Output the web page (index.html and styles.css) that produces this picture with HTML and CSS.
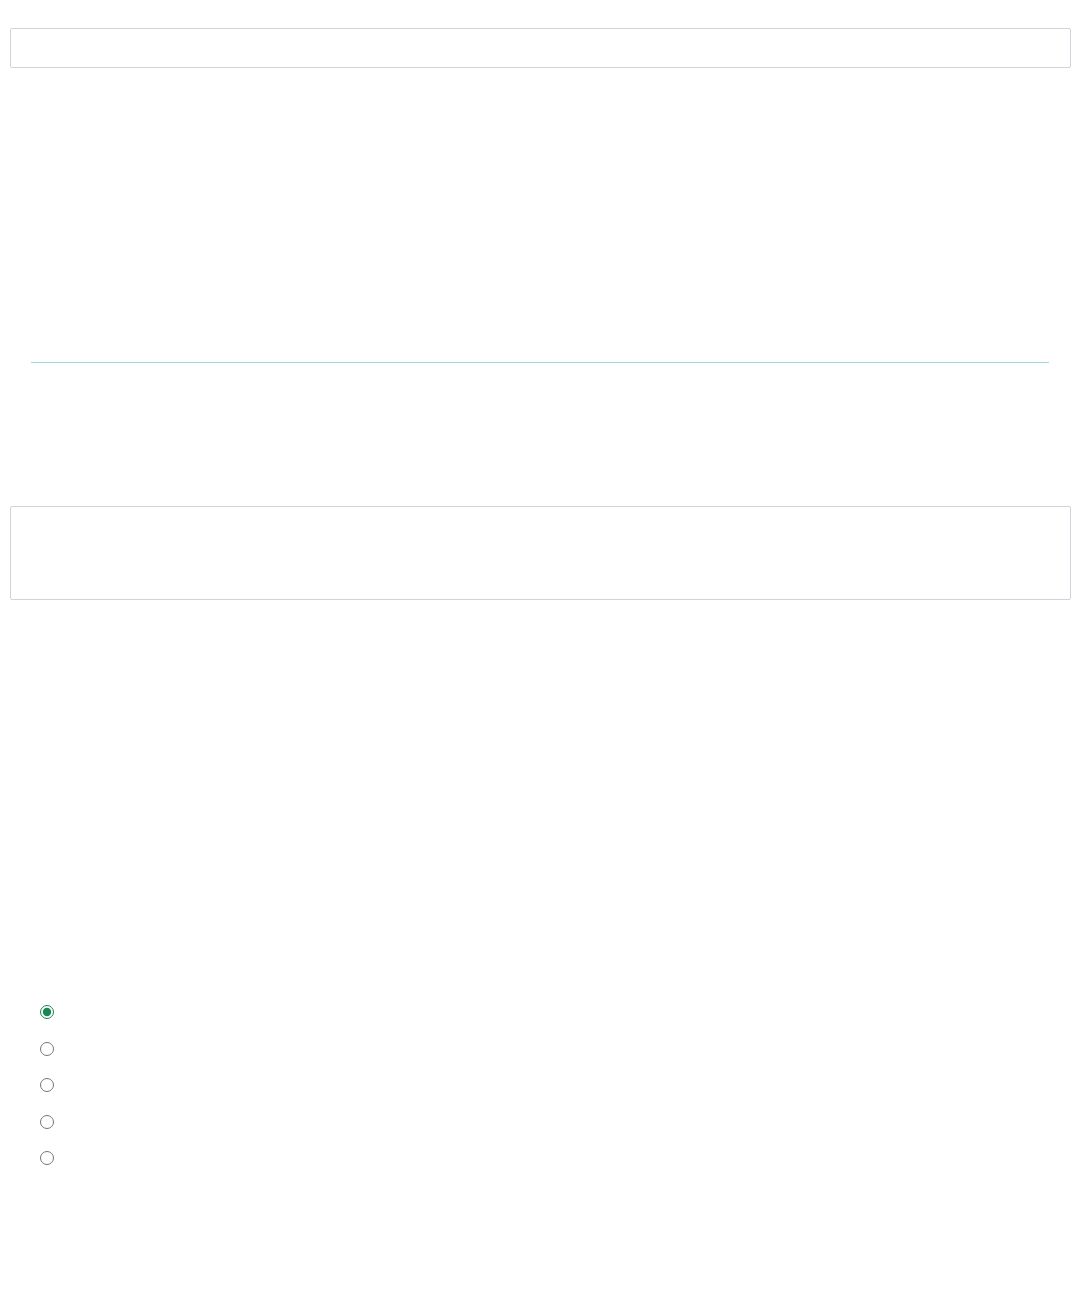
FILE: index.html
```html
<!DOCTYPE html>
<html lang="en">
<head>
    <meta charset="UTF-8">
    <meta name="viewport" content="width=device-width, initial-scale=1.0">
    <title>Form</title>
    <link rel="stylesheet" href="styles.css">
</head>
<body>
    <div class="page">
        <input type="text" class="field" aria-label="Title">

        <div class="divider-wrap">
            <hr class="divider">
        </div>

        <textarea class="field area" aria-label="Description"></textarea>

        <!-- Choice list -->
        <div class="choices">
            <label class="choice"><input type="radio" name="opt" checked></label>
            <label class="choice"><input type="radio" name="opt"></label>
            <label class="choice"><input type="radio" name="opt"></label>
            <label class="choice"><input type="radio" name="opt"></label>
            <label class="choice"><input type="radio" name="opt"></label>
        </div>
    </div>
</body>
</html>
```

FILE: styles.css
```css
body { margin: 0; background: #fff; font-family: "Liberation Sans", Arial, sans-serif; font-size: 16px; color: #212529; }
.page { padding: 28px 8px 120px 10px; display: flex; flex-direction: column; }
.field {
    box-sizing: border-box;
    width: 100%;
    height: 40px;
    margin: 0;
    border: 1px solid #cfd3dc;
    border-radius: 2px;
    background: #fff;
    font: inherit;
    padding: 6px 12px;
}
.divider-wrap { padding: 0 22px 0 21px; margin-top: 294px; }
.divider { margin: 0; border: 0; border-top: 1px solid #9ed8de; }
.area { height: 94px; margin-top: 143px; resize: none; display: block; }
.choices { margin-top: 394px; padding-left: 30px; display: flex; flex-direction: column; }
.choice { height: 36.5px; display: flex; align-items: center; }
.choice input { margin: 0; width: 14px; height: 14px; accent-color: #198754; }
```
